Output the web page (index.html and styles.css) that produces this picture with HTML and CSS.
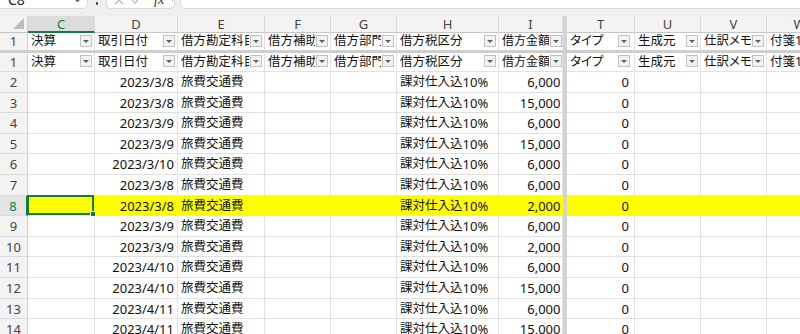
FILE: index.html
```html
<!DOCTYPE html>
<html lang="ja">
<head>
<meta charset="utf-8">
<title>Excel sheet</title>
<link rel="stylesheet" href="styles.css">
</head>
<body>
<div class="fbar">
  <div class="box name"><span class="nm">C8</span><svg class="chev" width="9" height="6" viewBox="0 0 9 6"><polyline points="1,1 4.5,4.5 8,1" fill="none" stroke="#555" stroke-width="1.2"/></svg></div>
  <div class="dots"><i></i></div>
  <div class="box fxb">
    <svg class="ic x" width="10" height="10" viewBox="0 0 10 10"><path d="M1 1L9 9M9 1L1 9" stroke="#b3b3b3" stroke-width="1.1" fill="none"/></svg>
    <svg class="ic ok" width="11" height="10" viewBox="0 0 11 10"><polyline points="1,5 4,8.5 10,1" fill="none" stroke="#b3b3b3" stroke-width="1.1"/></svg>
    <i class="fx">fx</i>
    <svg class="ic ch2" width="7" height="5" viewBox="0 0 7 5"><polyline points="1,1 3.5,3.5 6,1" fill="none" stroke="#777" stroke-width="1"/></svg>
  </div>
  <div class="box inp"></div>
</div>
<div class="gap"></div>

<div class="row hd">
  <div class="c rh corner"><svg width="11" height="11" viewBox="0 0 11 11"><polygon points="11,0 11,11 0,11" fill="#bdbdbd"/></svg></div>
  <div class="c C on">C</div>
  <div class="c D">D</div>
  <div class="c E">E</div>
  <div class="c F">F</div>
  <div class="c G">G</div>
  <div class="c H">H</div>
  <div class="c I">I</div>
  <div class="S"></div>
  <div class="c T">T</div>
  <div class="c U">U</div>
  <div class="c V">V</div>
  <div class="c W">W</div>
</div>

<div class="row fr">
  <div class="c rh">1</div>
  <div class="c C"><span class="t">決算</span><i class="dd"></i></div>
  <div class="c D"><span class="t">取引日付</span><i class="dd"></i></div>
  <div class="c E"><span class="t">借方勘定科目</span><i class="dd"></i></div>
  <div class="c F"><span class="t">借方補助科目</span><i class="dd"></i></div>
  <div class="c G"><span class="t">借方部門</span><i class="dd"></i></div>
  <div class="c H"><span class="t">借方税区分</span><i class="dd"></i></div>
  <div class="c I"><span class="t">借方金額</span><i class="dd"></i></div>
  <div class="S"></div>
  <div class="c T"><span class="t">タイプ</span><i class="dd"></i></div>
  <div class="c U"><span class="t">生成元</span><i class="dd"></i></div>
  <div class="c V"><span class="t">仕訳メモ</span><i class="dd"></i></div>
  <div class="c W"><span class="t">付箋1</span><i class="dd"></i></div>
</div>
<div class="sprow"></div>
<div class="row r1">
  <div class="c rh">1</div>
  <div class="c C"><span class="t">決算</span><i class="dd"></i></div>
  <div class="c D"><span class="t">取引日付</span><i class="dd"></i></div>
  <div class="c E"><span class="t">借方勘定科目</span><i class="dd"></i></div>
  <div class="c F"><span class="t">借方補助科目</span><i class="dd"></i></div>
  <div class="c G"><span class="t">借方部門</span><i class="dd"></i></div>
  <div class="c H"><span class="t">借方税区分</span><i class="dd"></i></div>
  <div class="c I"><span class="t">借方金額</span><i class="dd"></i></div>
  <div class="S"></div>
  <div class="c T"><span class="t">タイプ</span><i class="dd"></i></div>
  <div class="c U"><span class="t">生成元</span><i class="dd"></i></div>
  <div class="c V"><span class="t">仕訳メモ</span><i class="dd"></i></div>
  <div class="c W"><span class="t">付箋1</span><i class="dd"></i></div>
</div>

<div class="row d"><div class="c rh">2</div><div class="c C"></div><div class="c D n">2023/3/8</div><div class="c E"><span class="j">旅費交通費</span></div><div class="c F"></div><div class="c G"></div><div class="c H"><span class="j">課対仕入込</span>10%</div><div class="c I n">6,000</div><div class="S"></div><div class="c T n">0</div><div class="c U"></div><div class="c V"></div><div class="c W"></div></div>
<div class="row d"><div class="c rh">3</div><div class="c C"></div><div class="c D n">2023/3/8</div><div class="c E"><span class="j">旅費交通費</span></div><div class="c F"></div><div class="c G"></div><div class="c H"><span class="j">課対仕入込</span>10%</div><div class="c I n">15,000</div><div class="S"></div><div class="c T n">0</div><div class="c U"></div><div class="c V"></div><div class="c W"></div></div>
<div class="row d"><div class="c rh">4</div><div class="c C"></div><div class="c D n">2023/3/9</div><div class="c E"><span class="j">旅費交通費</span></div><div class="c F"></div><div class="c G"></div><div class="c H"><span class="j">課対仕入込</span>10%</div><div class="c I n">6,000</div><div class="S"></div><div class="c T n">0</div><div class="c U"></div><div class="c V"></div><div class="c W"></div></div>
<div class="row d"><div class="c rh">5</div><div class="c C"></div><div class="c D n">2023/3/9</div><div class="c E"><span class="j">旅費交通費</span></div><div class="c F"></div><div class="c G"></div><div class="c H"><span class="j">課対仕入込</span>10%</div><div class="c I n">15,000</div><div class="S"></div><div class="c T n">0</div><div class="c U"></div><div class="c V"></div><div class="c W"></div></div>
<div class="row d"><div class="c rh">6</div><div class="c C"></div><div class="c D n">2023/3/10</div><div class="c E"><span class="j">旅費交通費</span></div><div class="c F"></div><div class="c G"></div><div class="c H"><span class="j">課対仕入込</span>10%</div><div class="c I n">6,000</div><div class="S"></div><div class="c T n">0</div><div class="c U"></div><div class="c V"></div><div class="c W"></div></div>
<div class="row d pre"><div class="c rh">7</div><div class="c C"></div><div class="c D n">2023/3/8</div><div class="c E"><span class="j">旅費交通費</span></div><div class="c F"></div><div class="c G"></div><div class="c H"><span class="j">課対仕入込</span>10%</div><div class="c I n">6,000</div><div class="S"></div><div class="c T n">0</div><div class="c U"></div><div class="c V"></div><div class="c W"></div></div>
<div class="row d y"><div class="c rh on">8</div><div class="c C sel"><i class="handle"></i></div><div class="c D n">2023/3/8</div><div class="c E"><span class="j">旅費交通費</span></div><div class="c F"></div><div class="c G"></div><div class="c H"><span class="j">課対仕入込</span>10%</div><div class="c I n">2,000</div><div class="S"></div><div class="c T n">0</div><div class="c U"></div><div class="c V"></div><div class="c W"></div></div>
<div class="row d"><div class="c rh">9</div><div class="c C"></div><div class="c D n">2023/3/9</div><div class="c E"><span class="j">旅費交通費</span></div><div class="c F"></div><div class="c G"></div><div class="c H"><span class="j">課対仕入込</span>10%</div><div class="c I n">6,000</div><div class="S"></div><div class="c T n">0</div><div class="c U"></div><div class="c V"></div><div class="c W"></div></div>
<div class="row d"><div class="c rh">10</div><div class="c C"></div><div class="c D n">2023/3/9</div><div class="c E"><span class="j">旅費交通費</span></div><div class="c F"></div><div class="c G"></div><div class="c H"><span class="j">課対仕入込</span>10%</div><div class="c I n">2,000</div><div class="S"></div><div class="c T n">0</div><div class="c U"></div><div class="c V"></div><div class="c W"></div></div>
<div class="row d"><div class="c rh">11</div><div class="c C"></div><div class="c D n">2023/4/10</div><div class="c E"><span class="j">旅費交通費</span></div><div class="c F"></div><div class="c G"></div><div class="c H"><span class="j">課対仕入込</span>10%</div><div class="c I n">6,000</div><div class="S"></div><div class="c T n">0</div><div class="c U"></div><div class="c V"></div><div class="c W"></div></div>
<div class="row d"><div class="c rh">12</div><div class="c C"></div><div class="c D n">2023/4/10</div><div class="c E"><span class="j">旅費交通費</span></div><div class="c F"></div><div class="c G"></div><div class="c H"><span class="j">課対仕入込</span>10%</div><div class="c I n">15,000</div><div class="S"></div><div class="c T n">0</div><div class="c U"></div><div class="c V"></div><div class="c W"></div></div>
<div class="row d"><div class="c rh">13</div><div class="c C"></div><div class="c D n">2023/4/11</div><div class="c E"><span class="j">旅費交通費</span></div><div class="c F"></div><div class="c G"></div><div class="c H"><span class="j">課対仕入込</span>10%</div><div class="c I n">6,000</div><div class="S"></div><div class="c T n">0</div><div class="c U"></div><div class="c V"></div><div class="c W"></div></div>
<div class="row d"><div class="c rh">14</div><div class="c C"></div><div class="c D n">2023/4/11</div><div class="c E"><span class="j">旅費交通費</span></div><div class="c F"></div><div class="c G"></div><div class="c H"><span class="j">課対仕入込</span>10%</div><div class="c I n">15,000</div><div class="S"></div><div class="c T n">0</div><div class="c U"></div><div class="c V"></div><div class="c W"></div></div>
</body>
</html>
```

FILE: styles.css
```css
* { box-sizing: border-box; }
html, body { margin: 0; padding: 0; }
body {
  width: 800px;
  height: 334px;
  overflow: hidden;
  background: #fff;
  font-family: "Noto Sans", "Noto Sans CJK JP", sans-serif;
  font-size: 13px;
  color: #111;
  font-feature-settings: "palt";
}

/* formula bar (only its lower edge is visible) */
.fbar {
  height: 9px;
  background: #efefef;
  display: flex;
  align-items: flex-end;
  overflow: hidden;
}
.box {
  flex: none;
  height: 18px;
  background: #fff;
  border: 1px solid #dadada;
  border-top: none;
  border-radius: 0 0 5px 5px;
  display: flex;
  align-items: center;
}
.name {
  width: 88px;
  border-left: none;
  border-radius: 0 0 5px 0;
  padding: 0 5px 0 8px;
  justify-content: space-between;
  font-size: 14px;
  line-height: 18px;
  color: #222;
}
.dots {
  flex: none;
  width: 18px;
  height: 18px;
  display: flex;
  justify-content: center;
  align-items: flex-end;
  padding-bottom: 4px;
}
.dots i {
  width: 2px;
  height: 3px;
  background: #444;
  border-radius: 1px;
}
.fxb {
  width: 69px;
  padding-left: 7px;
}
.ic { flex: none; display: block; }
.ok { margin-left: 7px; }
.fx {
  margin-left: 12px;
  font-family: "Liberation Serif", serif;
  font-size: 14px;
  line-height: 18px;
  color: #333;
}
.ch2 { margin-left: 5px; }
.inp {
  flex: 1;
  margin-left: 5px;
  margin-right: -6px;
}
.gap {
  height: 7px;
  background: #efefef;
}

/* grid */
.row { display: flex; width: 833px; }
.c {
  flex: none;
  display: flex;
  align-items: flex-end;
  padding: 0 3px 1.5px;
  line-height: 16px;
  white-space: nowrap;
  overflow: hidden;
  border-right: 1px solid #e1e1e1;
  border-bottom: 1px solid #e1e1e1;
}
.n { justify-content: flex-end; }
.j, .t { font-size: 12.5px; }

.rh { width: 28px; }
.C { width: 67px; }
.D { width: 83px; }
.E { width: 87px; }
.F { width: 66px; }
.G { width: 66px; }
.H { width: 102px; }
.I { width: 64px; padding-right: 1.5px; }
.T { width: 68px; padding-right: 5px; }
.U { width: 66px; }
.V { width: 66px; }
.W { width: 66px; }
.S {
  flex: none;
  width: 4px;
  background: #d3d3d3;
}

.rh {
  justify-content: center;
  padding: 0 0 1.5px;
  background: #f3f3f3;
  color: #444;
  border-right-color: #cfcfcf;
  border-bottom-color: #dcdcdc;
}
.rh.on {
  color: #107c41;
  background: #e4e4e4;
  border-right: 2px solid #107c41;
}

/* column letters */
.hd { height: 17px; }
.hd .c {
  justify-content: center;
  align-items: center;
  padding: 0;
  background: #f3f3f3;
  color: #444;
  border-right-color: #dcdcdc;
  border-bottom-color: #c6c6c6;
}
.hd .c.on {
  background: #dcdcdc;
  color: #107c41;
  border-bottom: 2px solid #107c41;
}
.hd .corner {
  justify-content: flex-end;
  align-items: flex-end;
  padding: 0 3px 3px 0;
  border-right-color: #cfcfcf;
}
.corner svg { display: block; }

/* header rows with filter buttons */
.fr { height: 18px; }
.fr .c { border-bottom-color: #d0d0d0; }
.fr .rh, .r1 .rh { padding-bottom: 1px; }
.r1 { height: 19px; }
.sprow {
  height: 2px;
  background: #cdcdcd;
}
.t {
  flex: 1 1 auto;
  min-width: 0;
  overflow: hidden;
}
.I .t { font-size: 12px; }
.dd {
  flex: none;
  align-self: center;
  width: 12px;
  height: 12px;
  margin: 0 -1px 0 1px;
  border: 1px solid #c2c2c2;
  background: #f2f2f2;
  display: flex;
  align-items: center;
  justify-content: center;
}
.dd::after {
  content: "";
  display: block;
  margin-top: 1px;
  border-left: 3px solid transparent;
  border-right: 3px solid transparent;
  border-top: 3px solid #5f5f5f;
}

/* data rows */
.d { height: 20.6px; }
.pre .c:not(.rh) { border-bottom-color: #ffff00; }
.y .c:not(.rh) {
  background: #ffff00;
  border-color: #ffff00;
}

/* active cell C8 */
.sel {
  position: relative;
  overflow: visible;
}
.sel::before {
  content: "";
  position: absolute;
  left: -1px;
  top: -1px;
  right: 0;
  bottom: 0;
  border: 2px solid #107c41;
}
.handle {
  position: absolute;
  right: -2px;
  bottom: -2px;
  width: 6px;
  height: 6px;
  background: #107c41;
  border: 1px solid #fff;
}
```
